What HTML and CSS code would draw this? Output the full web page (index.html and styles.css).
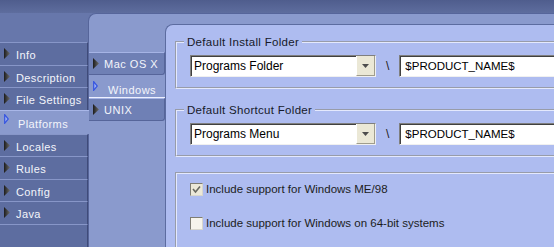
FILE: index.html
```html
<!doctype html>
<html>
<head>
<meta charset="utf-8">
<title>Platforms</title>
<link rel="stylesheet" href="styles.css">
</head>
<body>

<div class="topbar"></div>

<div class="main">
    <nav class="nav">
        <ul class="nav-list">
            <li class="nav-item"><svg class="arrow" width="6" height="11" viewBox="0 0 6 11"><polygon points="0,0 6,5.5 0,11" fill="url(#arrowShade)"/></svg><span class="label">Info</span></li>
            <li class="nav-item"><svg class="arrow" width="6" height="11" viewBox="0 0 6 11"><polygon points="0,0 6,5.5 0,11" fill="url(#arrowShade)"/></svg><span class="label">Description</span></li>
            <li class="nav-item"><svg class="arrow" width="6" height="11" viewBox="0 0 6 11"><polygon points="0,0 6,5.5 0,11" fill="url(#arrowShade)"/></svg><span class="label">File Settings</span></li>
            <li class="nav-item selected"><svg class="arrow" width="5" height="10" viewBox="0 0 5 10"><polygon points="0.7,0.7 4.3,5 0.7,9.3" fill="#9fb2f4" stroke="#3554e0" stroke-width="1.2"/></svg><span class="label">Platforms</span></li>
            <li class="nav-item"><svg class="arrow" width="6" height="11" viewBox="0 0 6 11"><polygon points="0,0 6,5.5 0,11" fill="url(#arrowShade)"/></svg><span class="label">Locales</span></li>
            <li class="nav-item"><svg class="arrow" width="6" height="11" viewBox="0 0 6 11"><polygon points="0,0 6,5.5 0,11" fill="url(#arrowShade)"/></svg><span class="label">Rules</span></li>
            <li class="nav-item"><svg class="arrow" width="6" height="11" viewBox="0 0 6 11"><polygon points="0,0 6,5.5 0,11" fill="url(#arrowShade)"/></svg><span class="label">Config</span></li>
            <li class="nav-item"><svg class="arrow" width="6" height="11" viewBox="0 0 6 11"><polygon points="0,0 6,5.5 0,11" fill="url(#arrowShade)"/></svg><span class="label">Java</span></li>
            <li class="nav-fill"></li>
        </ul>
    </nav>

    <div class="panel">
        <ul class="sub-list">
            <li class="sub-item"><svg class="arrow" width="6" height="11" viewBox="0 0 6 11"><polygon points="0,0 6,5.5 0,11" fill="url(#arrowShade)"/></svg><span>Mac OS X</span></li>
            <li class="sub-item selected"><svg class="arrow" width="5" height="10" viewBox="0 0 5 10"><polygon points="0.7,0.7 4.3,5 0.7,9.3" fill="#9fb2f4" stroke="#3554e0" stroke-width="1.2"/></svg><span class="label">Windows</span></li>
            <li class="sub-item"><svg class="arrow" width="6" height="11" viewBox="0 0 6 11"><polygon points="0,0 6,5.5 0,11" fill="url(#arrowShade)"/></svg><span>UNIX</span></li>
        </ul>

        <section class="content">
            <fieldset class="group">
                <legend>Default Install Folder</legend>
                <div class="field-row">
                    <div class="combo">
                        <span class="combo-value">Programs Folder</span>
                        <span class="combo-btn"><svg width="7" height="4" viewBox="0 0 7 4"><polygon points="0,0 7,0 3.5,4" fill="#4d4d4d"/></svg></span>
                    </div>
                    <span class="sep">\</span>
                    <div class="textbox">$PRODUCT_NAME$</div>
                </div>
            </fieldset>

            <fieldset class="group">
                <legend>Default Shortcut Folder</legend>
                <div class="field-row">
                    <div class="combo">
                        <span class="combo-value">Programs Menu</span>
                        <span class="combo-btn"><svg width="7" height="4" viewBox="0 0 7 4"><polygon points="0,0 7,0 3.5,4" fill="#4d4d4d"/></svg></span>
                    </div>
                    <span class="sep">\</span>
                    <div class="textbox">$PRODUCT_NAME$</div>
                </div>
            </fieldset>

            <fieldset class="group options">
                <label class="check-row">
                    <span class="check checked"><svg width="11" height="11" viewBox="0 0 11 11"><polyline points="2,5 4.5,8 9,2.5" fill="none" stroke="#6a6a62" stroke-width="1.6"/></svg></span>
                    Include support for Windows ME/98
                </label>
                <label class="check-row">
                    <span class="check"></span>
                    Include support for Windows on 64-bit systems
                </label>
            </fieldset>
        </section>
    </div>
</div>

<svg width="0" height="0" class="defs">
    <defs>
        <linearGradient id="arrowShade" x1="0" y1="0" x2="1" y2="0">
            <stop offset="0" stop-color="#1c1c1c"/>
            <stop offset="1" stop-color="#6b6b6b"/>
        </linearGradient>
    </defs>
</svg>

</body>
</html>
```

FILE: styles.css
```css
body {
    margin: 0;
    width: 554px;
    height: 247px;
    overflow: hidden;
    background-color: #6777ab;
    font-family: "Liberation Sans", Arial, sans-serif;
}

.defs {
    display: block;
    height: 0;
}

.topbar {
    height: 13px;
    background: linear-gradient(#4f5d8d, #5e6d9e);
}

.main {
    display: flex;
    height: 234px;
}

/* left navigation */

.nav {
    width: 88px;
    flex: none;
    padding-top: 29px;
    box-sizing: border-box;
    display: flex;
    flex-direction: column;
}

.nav-list {
    list-style: none;
    margin: 0;
    padding: 0;
    flex: 1;
    display: flex;
    flex-direction: column;
}

.nav-item {
    height: 22.5px;
    flex: none;
    box-sizing: border-box;
    display: flex;
    align-items: center;
    gap: 6px;
    padding-left: 4px;
    background-color: #5d6da0;
    border-top: 1px solid #8796c8;
    border-right: 1px solid #3f4b79;
    color: #f3f5fb;
    font-size: 11px;
    letter-spacing: 0.4px;
}

.nav-item .label {
    margin-top: 3px;
}

.nav-item.selected {
    height: 24px;
    align-items: flex-start;
    padding-top: 3px;
    gap: 9px;
    background-color: #8a9acd;
    border-top: 1px solid #a9b7e8;
    border-right: none;
    margin-right: -1px;
    position: relative;
    z-index: 1;
}

.nav-item.selected .label {
    margin-top: 4px;
}

.nav-fill {
    flex: 1;
    background-color: #5d6da0;
    border-top: 1px solid #8796c8;
    border-right: 1px solid #3f4b79;
}

.arrow {
    flex: none;
    display: block;
}

/* platform panel */

.panel {
    flex: 1;
    display: flex;
    background-color: #8a9acd;
    border-top: 1px solid #56659a;
    border-left: 1px solid #56659a;
    border-top-left-radius: 8px;
}

.sub-list {
    list-style: none;
    margin: 0;
    padding: 38px 0 0 0;
    width: 76px;
    flex: none;
}

.sub-item {
    height: 23px;
    box-sizing: border-box;
    display: flex;
    align-items: center;
    gap: 5px;
    padding-left: 4px;
    background-color: #6f80b5;
    border-top: 1px solid #a6b4e5;
    border-right: 1px solid #56659a;
    border-bottom: 1px solid #56659a;
    border-bottom-right-radius: 3px;
    color: #f3f5fb;
    font-size: 11px;
    letter-spacing: 0.5px;
}

.sub-item.selected {
    align-items: flex-start;
    padding-top: 6px;
    gap: 10px;
    background-color: transparent;
    border: none;
    border-bottom: 1px solid #eef1ff;
    border-radius: 0;
}

.sub-item.selected .label {
    margin-top: 3px;
}

.content {
    flex: 1;
    min-width: 0;
    margin-top: 10px;
    padding: 11px 0 0 9px;
    background-color: #aebcf0;
    border-top: 1px solid #5c6ca0;
    border-left: 1px solid #5c6ca0;
    border-top-left-radius: 8px;
    overflow: hidden;
}

.group {
    margin: 0 0 15px 0;
    padding: 7px 0 10px 13px;
    border: 2px groove #e4e9fd;
    border-right: none;
    min-width: 0;
}

.group legend {
    margin-left: -6px;
    padding: 0 3px;
    font-size: 11.5px;
    line-height: 12px;
    letter-spacing: 0.3px;
    color: #161a2a;
}

.field-row {
    display: flex;
    align-items: center;
    height: 22px;
}

.combo {
    width: 186px;
    height: 22px;
    box-sizing: border-box;
    display: flex;
    flex: none;
    background-color: #ffffff;
    border: 1px solid;
    border-color: #7f7f7f #f0f0f0 #f0f0f0 #7f7f7f;
    box-shadow: inset 1px 1px 0 #404040;
}

.combo-value {
    flex: 1;
    padding-left: 3px;
    font-size: 12px;
    line-height: 20px;
    color: #000000;
}

.combo-btn {
    width: 17px;
    display: flex;
    align-items: center;
    justify-content: center;
    background-color: #ebe8d6;
    border-left: 1px solid #ffffff;
    border-right: 1px solid #a09d8c;
    border-bottom: 1px solid #a09d8c;
}

.sep {
    margin: 0 10px;
    font-size: 12px;
    color: #1a1a1a;
}

.textbox {
    flex: 1;
    min-width: 0;
    height: 22px;
    box-sizing: border-box;
    padding-left: 5px;
    background-color: #ffffff;
    border: 1px solid;
    border-color: #7f7f7f #f0f0f0 #f0f0f0 #7f7f7f;
    border-right: none;
    box-shadow: inset 1px 1px 0 #404040;
    font-size: 11.5px;
    line-height: 20px;
    white-space: nowrap;
    overflow: hidden;
    color: #000000;
}

.options {
    height: 120px;
    margin-bottom: 0;
    padding-top: 7px;
}

.check-row {
    display: flex;
    align-items: center;
    gap: 3px;
    height: 16px;
    margin-bottom: 18px;
    font-size: 11.5px;
    color: #1c1c1c;
}

.check {
    width: 13px;
    height: 13px;
    box-sizing: border-box;
    display: flex;
    align-items: center;
    justify-content: center;
    background-color: #f6f4ec;
    border: 1px solid;
    border-color: #7f7d74 #d8d6cc #d8d6cc #7f7d74;
}

.check.checked {
    background-color: #ece8d8;
}
```
